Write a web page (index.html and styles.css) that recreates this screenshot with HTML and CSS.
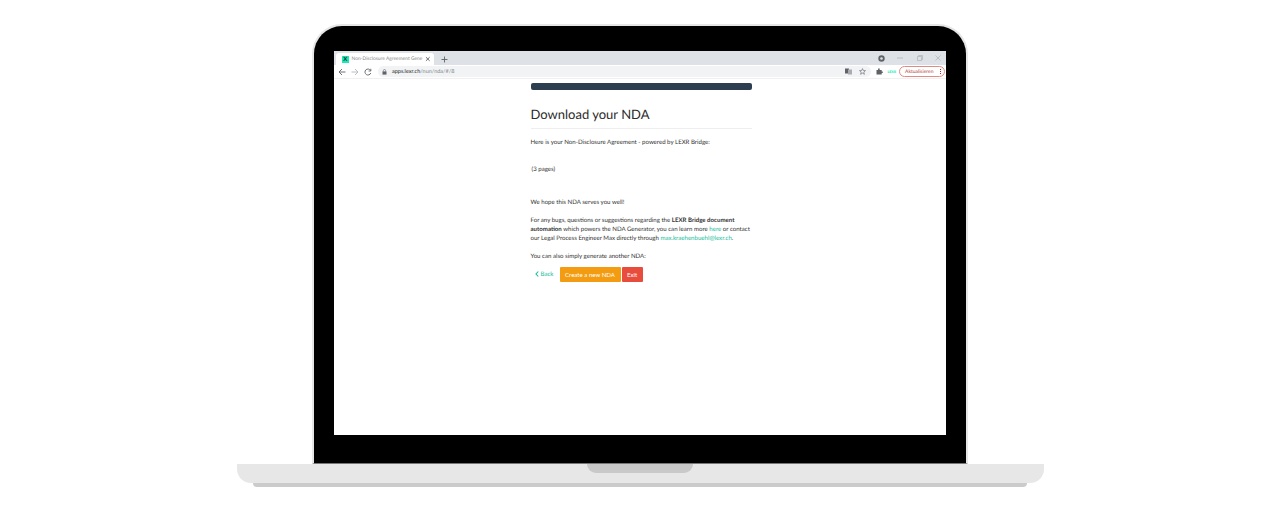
FILE: index.html
```html
<!DOCTYPE html>
<html lang="en">
<head>
    <meta charset="UTF-8">
    <title>Download your NDA</title>
    <link rel="stylesheet" href="styles.css">
</head>
<body>
    <div class="laptop">
        <div class="lid">
            <div class="screen">
                <div class="tabstrip">
                    <div class="tab">
                        <span class="favicon">X</span>
                        <span class="tab-title">Non-Disclosure Agreement Gene</span>
                        <svg class="tab-close" width="6" height="6" viewBox="0 0 6 6"><path d="M1 1l4 4M5 1L1 5" stroke="#5f6368" stroke-width="1"/></svg>
                    </div>
                    <svg class="new-tab" width="7" height="7" viewBox="0 0 7 7"><path d="M3.5 .5v6M.5 3.5h6" stroke="#5f6368" stroke-width=".9"/></svg>
                    <div class="window-controls">
                        <svg width="7" height="7" viewBox="0 0 7 7"><circle cx="3.5" cy="3.5" r="3.2" fill="#5f6368"/><circle cx="3.5" cy="3.5" r="1.3" fill="#dee1e6"/></svg>
                        <svg class="win-min" width="6" height="6" viewBox="0 0 6 6"><path d="M0 3h6" stroke="#aeb1b5" stroke-width=".7"/></svg>
                        <svg width="6" height="6" viewBox="0 0 6 6"><path d="M.5 1.500h4v4h-4zM1.500 1.500v-1h4v4h-1" fill="none" stroke="#aeb1b5" stroke-width=".7"/></svg>
                        <svg width="6" height="6" viewBox="0 0 6 6"><path d="M.5 .5l5 5M5.500 .5l-5 5" stroke="#aeb1b5" stroke-width=".7"/></svg>
                    </div>
                </div>
                <div class="toolbar">
                    <svg width="8" height="8" viewBox="0 0 8 8"><path d="M7.500 4H1M4 1L1 4l3 3" fill="none" stroke="#5f6368" stroke-width=".9"/></svg>
                    <svg width="8" height="8" viewBox="0 0 8 8"><path d="M.5 4H7M4 1l3 3-3 3" fill="none" stroke="#b4b7ba" stroke-width=".9"/></svg>
                    <svg width="8" height="8" viewBox="0 0 8 8"><path d="M6.800 5a3 3 0 1 1-.3-2.600M6.800 .8v2.200H4.600" fill="none" stroke="#5f6368" stroke-width=".9"/></svg>
                    <div class="omnibox">
                        <svg width="5" height="6" viewBox="0 0 5 6"><path d="M1.400 2.500V1.600a1.100 1.100 0 0 1 2.200 0v.9" fill="none" stroke="#5f6368" stroke-width=".6"/><rect x=".5" y="2.400" width="4" height="3.200" fill="#5f6368"/></svg>
                        <span class="url"><b>apps.lexr.ch</b>/nun/nda/#/8</span>
                        <svg width="7" height="7" viewBox="0 0 7 7"><rect x="0" y=".5" width="4" height="5" fill="#5f6368"/><rect x="3" y="1.500" width="4" height="5" fill="#a9acb0"/></svg>
                        <svg class="omni-star" width="7" height="7" viewBox="0 0 7 7"><path d="M3.500 .6l.9 2h2.100L4.800 4l.6 2.300-1.900-1.200-1.900 1.200L2.200 4 .5 2.600h2.100z" fill="none" stroke="#5f6368" stroke-width=".6"/></svg>
                    </div>
                    <svg width="7" height="7" viewBox="0 0 7 7"><path d="M.5 2h1.600V.6h1.600V2h2v1.600h1.100v1.300H5.700v1.700H.5z" fill="#5f6368"/></svg>
                    <span class="lexr-ext">LEXR</span>
                    <div class="update-btn"><span>Aktualisieren</span><span class="dots"></span></div>
                </div>
                <div class="page">
                    <main class="content">
                        <div class="progress"></div>
                        <h1>Download your NDA</h1>
                        <p class="intro">Here is your Non-Disclosure Agreement - powered by LEXR Bridge:</p>
                        <p class="pages">(3 pages)</p>
                        <p class="hope">We hope this NDA serves you well!</p>
                        <p class="bugs">For any bugs, questions or suggestions regarding the <b>LEXR Bridge document automation</b> which powers the NDA Generator, you can learn more <a>here</a> or contact our Legal Process Engineer Max directly through <a>max.kraehenbuehl@lexr.ch</a>.</p>
                        <p class="again">You can also simply generate another NDA:</p>
                        <div class="actions">
                            <a class="back"><svg width="4" height="6" viewBox="0 0 4 6"><path d="M3.300 .5L1 3l2.300 2.500" fill="none" stroke="#18bc9c" stroke-width="1.100"/></svg>Back</a>
                            <button class="btn btn-orange">Create a new NDA</button>
                            <button class="btn btn-red">Exit</button>
                        </div>
                    </main>
                </div>
            </div>
        </div>
        <div class="base"><div class="notch"></div></div>
        <div class="foot"></div>
    </div>
</body>
</html>
```

FILE: styles.css
```css
body {
    margin: 0;
    background: #fff;
    font-family: Lato, "Open Sans", sans-serif;
    text-rendering: geometricPrecision;
    overflow: hidden;
}

.laptop {
    display: flex;
    flex-direction: column;
    align-items: center;
    padding-top: 24px;
}

.lid {
    width: 656px;
    height: 440px;
    flex: none;
    box-sizing: border-box;
    padding: 25px 20px 28px;
    background: #000;
    border: 2px solid #e6e6e6;
    border-bottom: 1px solid #777;
    border-radius: 30px 30px 0 0;
}

.screen {
    height: 100%;
    display: flex;
    flex-direction: column;
    background: #fff;
}

.tabstrip {
    height: 14px;
    flex: none;
    display: flex;
    align-items: flex-end;
    background: #dee1e6;
    padding-left: 2px;
}

.tab {
    width: 98px;
    height: 12px;
    display: flex;
    align-items: center;
    gap: 3px;
    box-sizing: border-box;
    padding: 0 3px 0 6px;
    background: #fff;
    border-radius: 3px 3px 0 0;
}

.favicon {
    width: 7px;
    height: 7px;
    background: #1de9b6;
    color: #1c3a3a;
    font-size: 6px;
    font-weight: 900;
    line-height: 7px;
    text-align: center;
}

.tab-title {
    flex: 1;
    font-size: 4.9px;
    color: #888;
    white-space: nowrap;
}

.new-tab {
    margin: 0 0 2px 7px;
}

.window-controls {
    margin-left: auto;
    height: 14px;
    display: flex;
    align-items: center;
    gap: 12px;
    padding-right: 5px;
}

.win-min {
    margin-right: 2px;
}

.toolbar {
    height: 14px;
    flex: none;
    display: flex;
    align-items: center;
    gap: 5px;
    padding: 0 1px 0 4px;
    background: #fff;
    border-bottom: 1px solid #f0f0f0;
    box-sizing: border-box;
}

.omnibox {
    flex: 1;
    height: 11px;
    display: flex;
    align-items: center;
    gap: 4px;
    margin-left: 1px;
    padding: 0 5px 0 4px;
    background: #f1f3f4;
    border-radius: 6px;
}

.url {
    flex: 1;
    margin-left: 1px;
    font-size: 5.5px;
    color: #80868b;
}

.url b {
    font-weight: 400;
    color: #222;
}

.omni-star {
    margin-left: 3px;
}

.lexr-ext {
    margin-right: -2px;
    font-size: 3.5px;
    font-weight: 900;
    color: #1de9b6;
}

.update-btn {
    width: 46px;
    height: 11px;
    box-sizing: border-box;
    display: flex;
    align-items: center;
    justify-content: space-between;
    padding: 0 3px 0 5px;
    border: 1px solid #e08a84;
    border-radius: 6px;
    font-size: 5px;
    color: #b3453d;
}

.dots {
    width: 1px;
    height: 1px;
    background: #c5221f;
    box-shadow: 0 -2px 0 #c5221f, 0 2px 0 #c5221f;
}

.page {
    flex: 1;
    padding-left: 2px;
    background: #fff;
}

.content {
    width: 221px;
    margin: 0 auto;
    padding-top: 4px;
    color: #333;
    font-size: 6.1px;
    line-height: 9px;
}

.progress {
    height: 7px;
    background: #2c3e50;
    border-radius: 2px;
}

h1 {
    margin: 16px 0 0;
    padding-bottom: 6px;
    font-size: 13px;
    font-weight: 400;
    line-height: 16px;
    color: #2b2b2b;
    border-bottom: 1px solid #eee;
}

p {
    margin: 0;
}

.intro {
    margin-top: 9px;
}

.pages {
    margin-top: 18px;
    padding-left: 1px;
}

.hope {
    margin-top: 24px;
}

.bugs {
    margin-top: 9px;
}

.again {
    margin-top: 9px;
}

b {
    font-weight: 700;
}

a {
    color: #18bc9c;
}

.actions {
    display: flex;
    align-items: center;
    margin-top: 6px;
}

.back {
    width: 29px;
    box-sizing: border-box;
    padding-left: 4px;
}

.back svg {
    margin-right: 2px;
    vertical-align: -0.5px;
}

.btn {
    height: 15px;
    margin: 0 1px 0 0;
    padding: 0;
    border: 0;
    border-radius: 1px;
    color: #fff;
    font-family: inherit;
    font-size: 6.1px;
}

.btn-orange {
    width: 61px;
    background: #f39c12;
}

.btn-red {
    width: 21px;
    background: #e74c3c;
}

.base {
    width: 807px;
    height: 19px;
    flex: none;
    display: flex;
    justify-content: center;
    background: #e7e7e7;
    border-radius: 0 0 14px 14px;
}

.notch {
    width: 106px;
    height: 9px;
    background: #c9c9c9;
    border-radius: 0 0 12px 12px;
}

.foot {
    width: 774px;
    height: 4px;
    background: #cbcbcb;
    border-radius: 0 0 5px 5px;
}
```
